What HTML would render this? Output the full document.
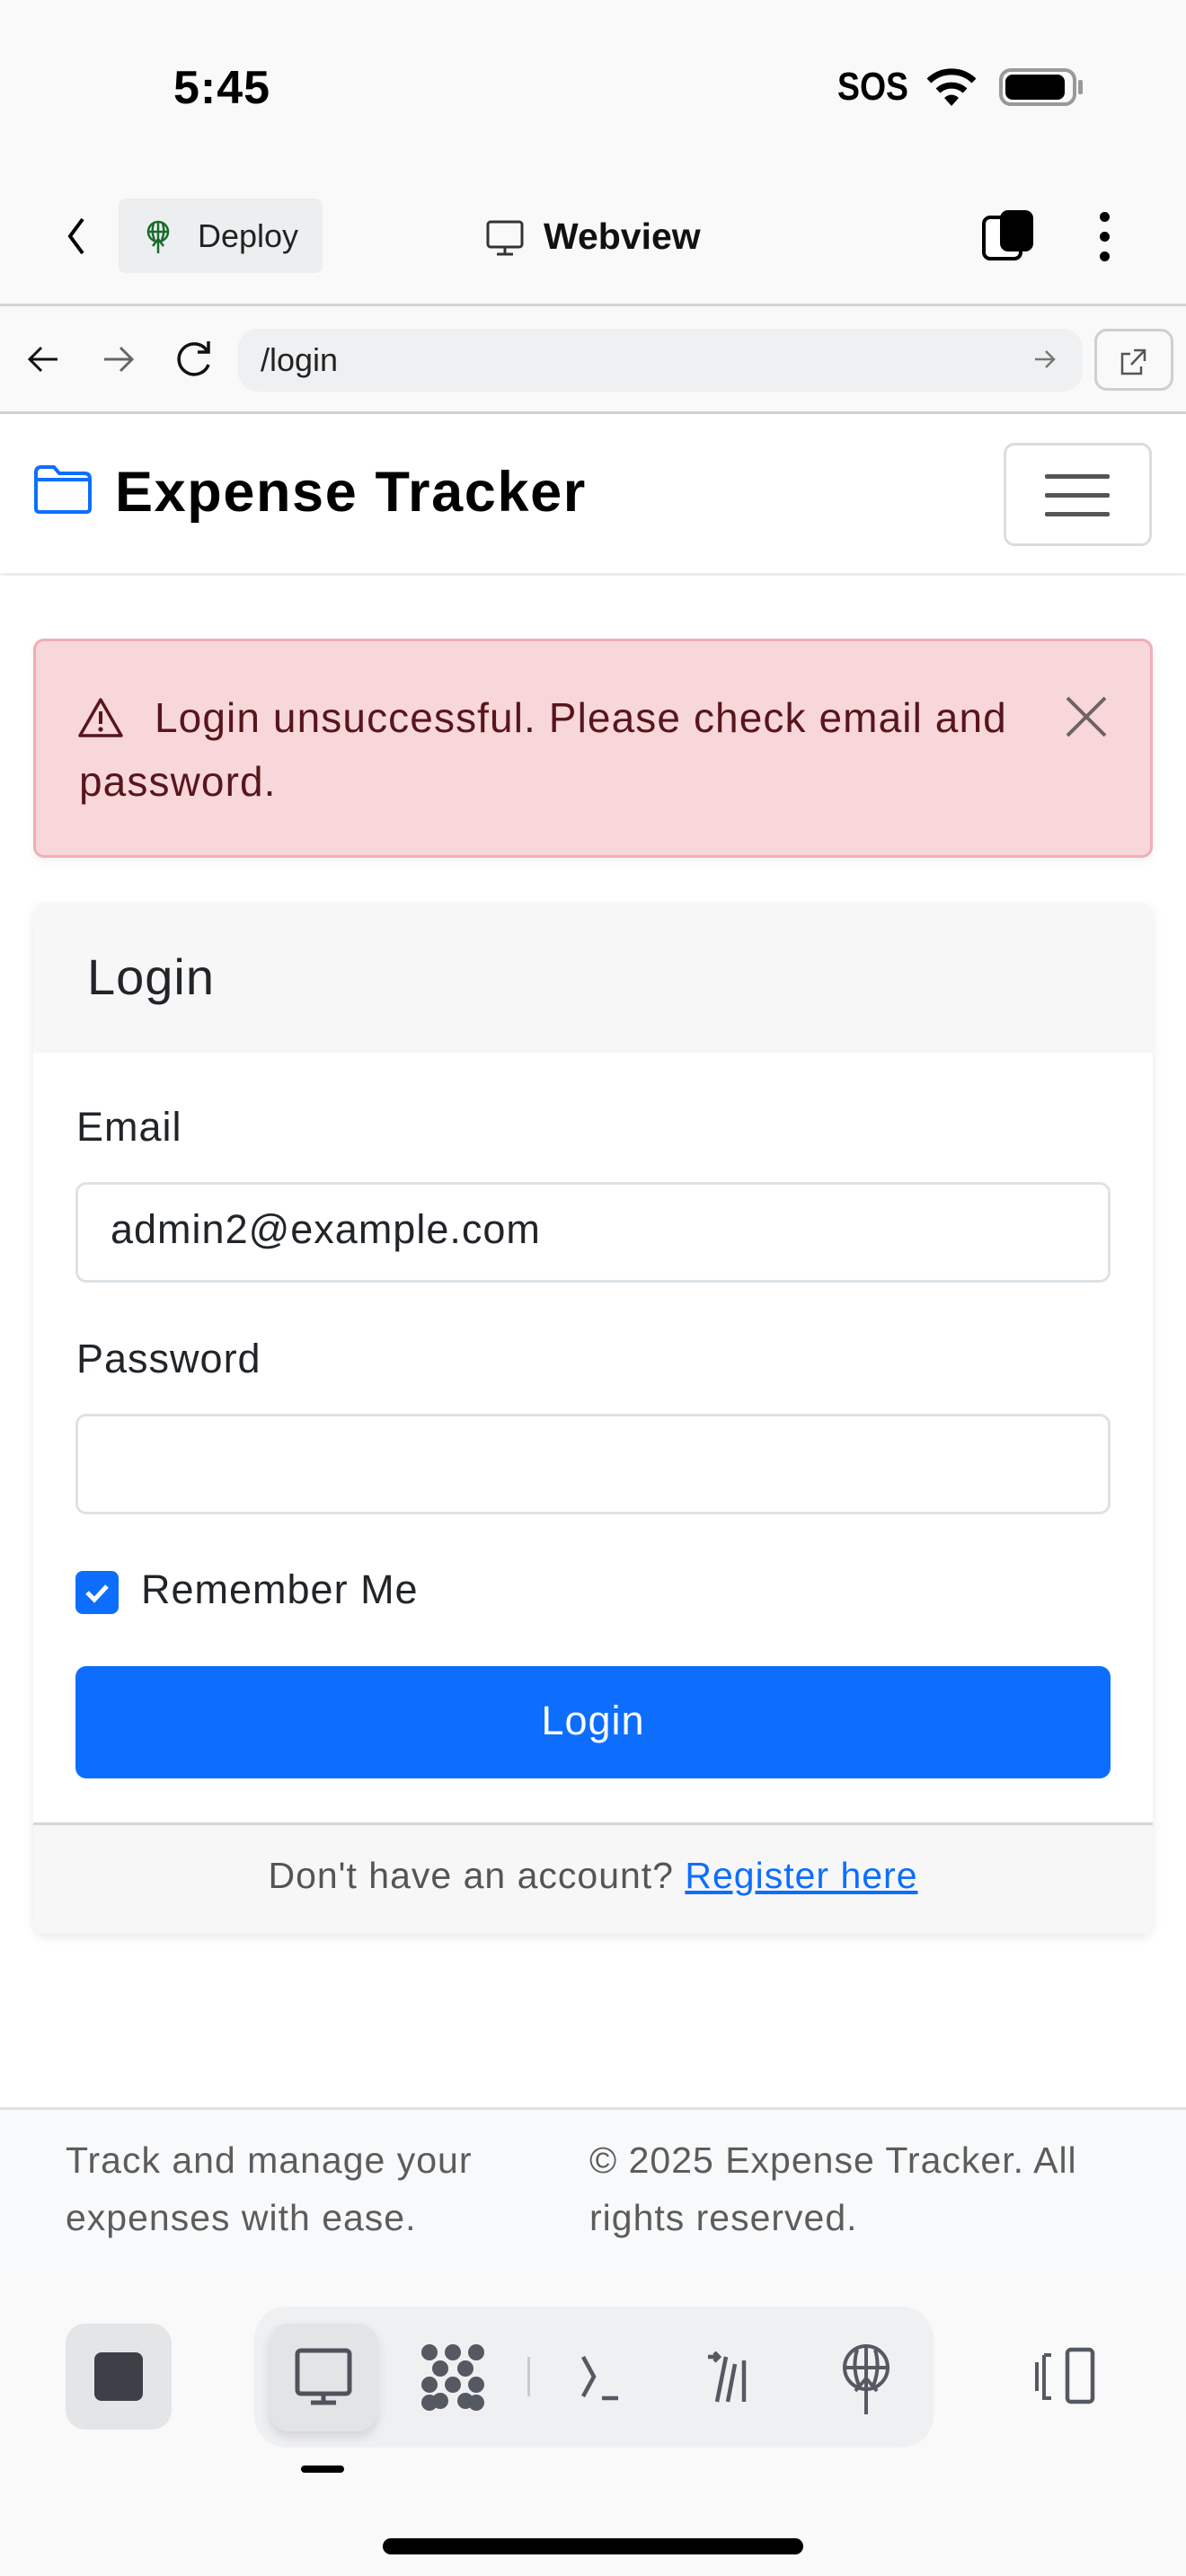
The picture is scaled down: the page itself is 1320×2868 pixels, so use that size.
<!DOCTYPE html>
<html><head><meta charset="utf-8"><style>
*{box-sizing:border-box;margin:0;padding:0}
body{width:1320px;height:2868px;background:#f9f9f9;font-family:"Liberation Sans",sans-serif;position:relative;overflow:hidden;color:#212529}
.a{position:absolute}
.t{white-space:nowrap}
.ls{letter-spacing:1px}
</style></head><body>
<!-- status bar -->
<div class="a t" style="left:193px;top:68px;font-size:52px;font-weight:bold;color:#000;letter-spacing:1px">5:45</div>
<div class="a t" style="left:932px;top:72px;font-size:44px;font-weight:bold;color:#000;transform:scaleX(.85);transform-origin:left">SOS</div>
<svg class="a" style="left:1030px;top:74px" width="58" height="48" viewBox="0 0 58 48"><path d="M4 16 A36 36 0 0 1 54 16" stroke="#000" stroke-width="7" fill="none"/><path d="M14 27 A22 22 0 0 1 44 27" stroke="#000" stroke-width="7" fill="none"/><path d="M29 44 L21 35 A11 11 0 0 1 37 35Z" fill="#000"/></svg>
<div class="a" style="left:1112px;top:76px;width:86px;height:42px;border:4px solid #999;border-radius:13px"></div>
<div class="a" style="left:1119px;top:83px;width:66px;height:28px;background:#000;border-radius:8px"></div>
<div class="a" style="left:1200px;top:89px;width:5px;height:16px;background:#999;border-radius:2px"></div>
<!-- top bar -->
<svg class="a" style="left:70px;top:240px" width="30" height="46"><path d="M22 4 L8 23 L22 42" stroke="#000" stroke-width="4" fill="none"/></svg>
<div class="a" style="left:132px;top:221px;width:227px;height:83px;background:#eceef0;border-radius:8px"></div>
<svg class="a" style="left:160px;top:244px" width="32" height="40" viewBox="0 0 32 40"><circle cx="16" cy="14" r="11" stroke="#1a6b2a" stroke-width="2.5" fill="none"/><path d="M5 14H27M16 3V38M10 30L16 22L22 30M11 5Q8 14 12 23M21 5Q24 14 20 23" stroke="#1a6b2a" stroke-width="2.5" fill="none"/></svg>
<div class="a t" style="left:220px;top:242px;font-size:36px;color:#222">Deploy</div>
<svg class="a" style="left:540px;top:244px" width="46" height="42"><rect x="3" y="3" width="38" height="28" rx="3" stroke="#333" stroke-width="3" fill="none"/><path d="M22 31V38M13 39H31" stroke="#333" stroke-width="3"/></svg>
<div class="a t" style="left:605px;top:240px;font-size:41px;font-weight:bold;color:#111">Webview</div>
<div class="a" style="left:1093px;top:240px;width:45px;height:50px;border:4px solid #000;border-radius:9px;background:#fff"></div>
<div class="a" style="left:1113px;top:234px;width:37px;height:46px;background:#000;border-radius:9px"></div>
<div class="a" style="left:1224px;top:236px;width:11px;height:11px;background:#000;border-radius:50%"></div>
<div class="a" style="left:1224px;top:258px;width:11px;height:11px;background:#000;border-radius:50%"></div>
<div class="a" style="left:1224px;top:280px;width:11px;height:11px;background:#000;border-radius:50%"></div>
<div class="a" style="left:0;top:338px;width:1320px;height:3px;background:#d4d4d4"></div>
<!-- url row -->
<svg class="a" style="left:28px;top:380px" width="40" height="40"><path d="M36 20H6M18 7L5 20L18 33" stroke="#111" stroke-width="3" fill="none"/></svg>
<svg class="a" style="left:112px;top:380px" width="40" height="40"><path d="M4 20H34M22 7L35 20L22 33" stroke="#666" stroke-width="3" fill="none"/></svg>
<svg class="a" style="left:192px;top:376px" width="48" height="48"><path d="M38 14A17 17 0 1 0 40 30" stroke="#111" stroke-width="3.5" fill="none"/><path d="M40 4V16H28" stroke="#111" stroke-width="3.5" fill="none"/></svg>
<div class="a" style="left:265px;top:366px;width:940px;height:70px;background:#eff0f2;border-radius:22px"></div>
<div class="a t" style="left:290px;top:380px;font-size:36px;color:#222">/login</div>
<svg class="a" style="left:1150px;top:386px" width="26" height="28"><path d="M2 14H22M14 5L23 14L14 23" stroke="#777" stroke-width="2.5" fill="none"/></svg>
<div class="a" style="left:1218px;top:366px;width:88px;height:69px;border:3px solid #cfcfcf;border-radius:14px"></div>
<svg class="a" style="left:1244px;top:386px" width="36" height="34"><path d="M14 8H5V30H26V22M18 4H30V16M30 4L15 20" stroke="#555" stroke-width="2.5" fill="none"/></svg>
<div class="a" style="left:0;top:458px;width:1320px;height:3px;background:#d4d4d4"></div>
<!-- navbar -->
<div class="a" style="left:0;top:461px;width:1320px;height:177px;background:#fff;box-shadow:0 3px 8px rgba(0,0,0,.08)"></div>
<svg class="a" style="left:36px;top:516px" width="68" height="58" viewBox="0 0 68 58"><path d="M4 10Q4 4 10 4H24L30 11H58Q64 11 64 17V50Q64 54 60 54H8Q4 54 4 50Z" stroke="#0d6efd" stroke-width="4" fill="none"/><path d="M4 18H64" stroke="#0d6efd" stroke-width="4"/></svg>
<div class="a t" style="left:128px;top:512px;font-size:63px;font-weight:bold;color:#000;letter-spacing:1.6px">Expense Tracker</div>
<div class="a" style="left:1117px;top:493px;width:165px;height:115px;border:3px solid #dcdcdc;border-radius:12px;background:#fff"></div>
<div class="a" style="left:1163px;top:528px;width:72px;height:5px;background:#555;border-radius:2px"></div>
<div class="a" style="left:1163px;top:549px;width:72px;height:5px;background:#555;border-radius:2px"></div>
<div class="a" style="left:1163px;top:570px;width:72px;height:5px;background:#555;border-radius:2px"></div>
<!-- main white -->
<div class="a" style="left:0;top:641px;width:1320px;height:1705px;background:#fff"></div>
<!-- alert -->
<div class="a" style="left:37px;top:711px;width:1246px;height:244px;background:#f8d7da;border:3px solid #f1aeb5;border-radius:12px;box-shadow:0 4px 10px rgba(0,0,0,.06)"></div>
<svg class="a" style="left:86px;top:776px" width="52" height="46" viewBox="0 0 52 46"><path d="M26 3L49 43H3Z" stroke="#58151c" stroke-width="3.5" fill="none" stroke-linejoin="round"/><path d="M26 16V30" stroke="#58151c" stroke-width="4"/><circle cx="26" cy="36" r="2.6" fill="#58151c"/></svg>
<div class="a t" style="left:172px;top:764px;font-size:46px;color:#58151c;line-height:71px;letter-spacing:1.1px">Login unsuccessful. Please check email and</div>
<div class="a t" style="left:88px;top:835px;font-size:46px;color:#58151c;line-height:71px;letter-spacing:1.1px">password.</div>
<svg class="a" style="left:1184px;top:773px" width="50" height="50"><path d="M4 4L46 46M46 4L4 46" stroke="#6f6264" stroke-width="4"/></svg>
<!-- card -->
<div class="a" style="left:37px;top:1005px;width:1246px;height:1148px;background:#fff;border-radius:14px;box-shadow:0 4px 12px rgba(0,0,0,.09);overflow:hidden">
 <div class="a" style="left:0;top:0;width:1246px;height:167px;background:#f7f7f7"></div>
 <div class="a t" style="left:60px;top:50px;font-size:56px;color:#212529;letter-spacing:1px">Login</div>
 <div class="a t ls" style="left:48px;top:224px;font-size:45px">Email</div>
 <div class="a" style="left:47px;top:311px;width:1152px;height:112px;border:3px solid #dee2e6;border-radius:12px"></div>
 <div class="a t ls" style="left:86px;top:338px;font-size:45px">admin2@example.com</div>
 <div class="a t ls" style="left:48px;top:482px;font-size:45px">Password</div>
 <div class="a" style="left:47px;top:569px;width:1152px;height:112px;border:3px solid #dee2e6;border-radius:12px"></div>
 <div class="a" style="left:47px;top:744px;width:48px;height:48px;background:#0d6efd;border-radius:8px"></div>
 <svg class="a" style="left:47px;top:744px" width="48" height="48"><path d="M13 24L21 32L35 17" stroke="#fff" stroke-width="5" fill="none"/></svg>
 <div class="a t ls" style="left:120px;top:739px;font-size:45px">Remember Me</div>
 <div class="a ls" style="left:47px;top:850px;width:1152px;height:125px;background:#0d6efd;border-radius:12px;color:#fff;font-size:45px;text-align:center;line-height:122px">Login</div>
 <div class="a" style="left:0;top:1024px;width:1246px;height:124px;background:#f7f7f7;border-top:3px solid #d6d6d6"></div>
 <div class="a t ls" style="left:0;top:1060px;width:1246px;text-align:center;font-size:41px;color:#555">Don't have an account? <span style="color:#0d6efd;text-decoration:underline">Register here</span></div>
</div>
<!-- footer -->
<div class="a" style="left:0;top:2346px;width:1320px;height:180px;background:#f8f9fa;border-top:3px solid #dee2e6"></div>
<div class="a t ls" style="left:73px;top:2373px;font-size:41px;color:#5c5c5c;line-height:64px">Track and manage your<br>expenses with ease.</div>
<div class="a t ls" style="left:656px;top:2373px;font-size:41px;color:#5c5c5c;line-height:64px">© 2025 Expense Tracker. All<br>rights reserved.</div>
<!-- bottom toolbar -->
<div class="a" style="left:73px;top:2587px;width:118px;height:118px;background:#e4e5e7;border-radius:22px"></div>
<div class="a" style="left:105px;top:2619px;width:54px;height:54px;background:#3e4047;border-radius:8px"></div>
<div class="a" style="left:283px;top:2568px;width:756px;height:157px;background:#eff0f2;border-radius:36px"></div>
<div class="a" style="left:300px;top:2587px;width:120px;height:120px;background:#e3e4e6;border-radius:22px;box-shadow:0 6px 12px rgba(0,0,0,.12)"></div>
<svg class="a" style="left:326px;top:2612px" width="68" height="68"><rect x="5" y="5" width="58" height="48" rx="4" stroke="#50535b" stroke-width="5" fill="none"/><path d="M34 53V62M20 63H48" stroke="#50535b" stroke-width="5"/></svg>
<svg class="a" style="left:466px;top:2609px" width="76" height="76" viewBox="0 0 76 76"><g fill="#555962"><circle cx="12" cy="10" r="9"/><circle cx="38" cy="10" r="9"/><circle cx="64" cy="10" r="9"/><circle cx="24" cy="28" r="9"/><circle cx="52" cy="28" r="9"/><circle cx="12" cy="46" r="9"/><circle cx="38" cy="46" r="9"/><circle cx="64" cy="46" r="9"/><circle cx="24" cy="64" r="9"/><circle cx="52" cy="64" r="9"/><circle cx="12" cy="66" r="9"/><circle cx="64" cy="66" r="9"/></g></svg>
<div class="a" style="left:587px;top:2624px;width:3px;height:44px;background:#c8c9cc"></div>
<svg class="a" style="left:644px;top:2620px" width="60" height="60"><path d="M5 4L17 26L5 48M26 50H44" stroke="#555962" stroke-width="4.5" fill="none"/></svg>
<svg class="a" style="left:786px;top:2618px" width="60" height="60"><path d="M2 6H14M9 1L14 6L9 11M22 6L12 56M32 14L24 56M42 10V56" stroke="#555962" stroke-width="4.5" fill="none"/></svg>
<svg class="a" style="left:934px;top:2608px" width="60" height="84" viewBox="0 0 60 84"><circle cx="30" cy="28" r="24" stroke="#555962" stroke-width="4" fill="none"/><path d="M6 28H54M30 4V80M18 54L30 40L42 54M20 8Q14 28 22 48M40 8Q46 28 38 48" stroke="#555962" stroke-width="4" fill="none"/></svg>
<svg class="a" style="left:1150px;top:2612px" width="76" height="68"><path d="M4 18V50M12 10V58H20M12 10H20" stroke="#555962" stroke-width="4" fill="none"/><rect x="38" y="4" width="28" height="58" rx="4" stroke="#555962" stroke-width="4.5" fill="none"/></svg>
<div class="a" style="left:335px;top:2745px;width:48px;height:8px;background:#000;border-radius:4px"></div>
<div class="a" style="left:426px;top:2826px;width:468px;height:18px;background:#000;border-radius:9px"></div>
</body></html>
